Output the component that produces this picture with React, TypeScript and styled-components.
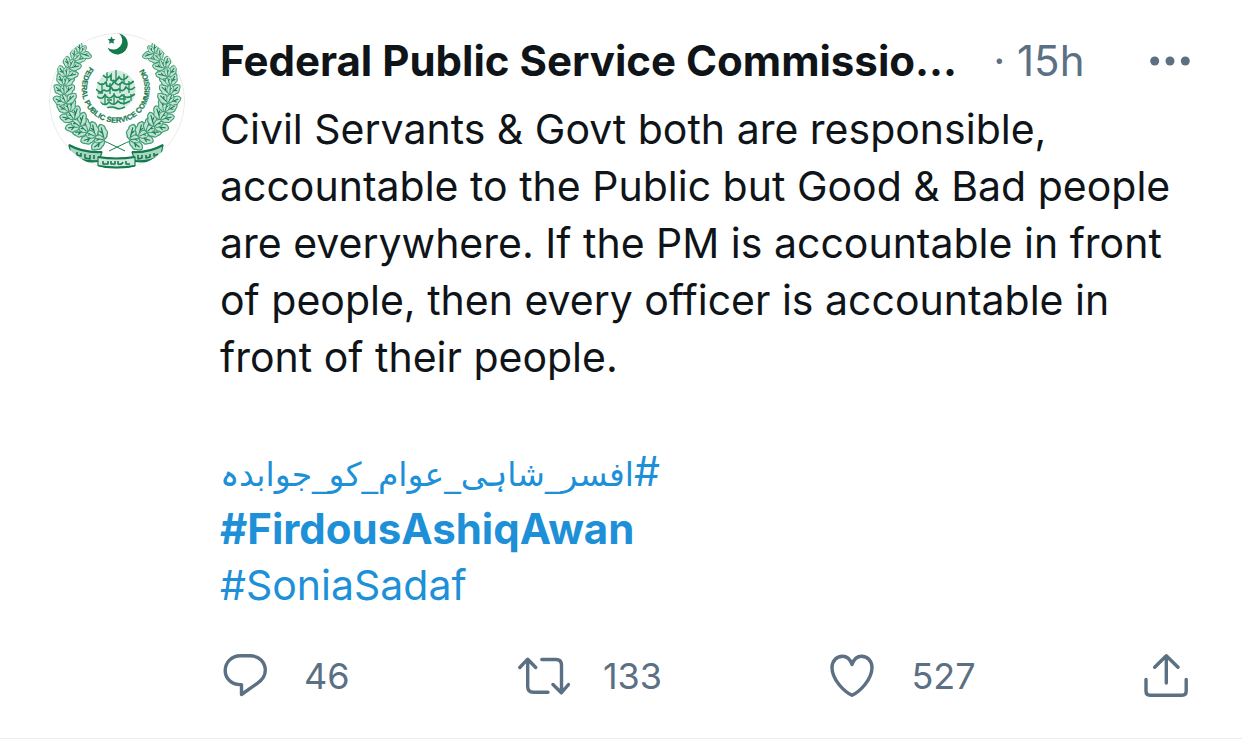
import React from 'react';
import styled, { createGlobalStyle } from 'styled-components';

const GlobalStyle = createGlobalStyle`
  * { box-sizing: border-box; }
  body {
    margin: 0;
    background: #fff;
    color: #0f1419;
    font-family: Inter, 'Liberation Sans', sans-serif;
  }
`;

const Tweet = styled.article`
  display: grid;
  grid-template-columns: 136px minmax(0, 1fr);
  column-gap: 35px;
  padding: 32px 52px 40px 49px;
  border-bottom: 1px solid #ebeef0;
`;

const Avatar = styled.a`
  display: block;
  height: 136px;
  margin-top: 1px;
  border-radius: 50%;
  overflow: hidden;
`;

const Content = styled.div`
  min-width: 0;
`;

const Header = styled.header`
  display: flex;
  align-items: center;
  height: 57px;
  font-size: 42px;
  line-height: 57px;
`;

const Name = styled.a`
  color: #0f1419;
  font-weight: 700;
  text-decoration: none;
  white-space: nowrap;
`;

const Time = styled.span`
  margin-left: 36px;
  color: #5b7083;
  white-space: nowrap;
`;

const IconButton = styled.button`
  display: flex;
  align-items: center;
  padding: 0;
  border: 0;
  background: none;
  color: #5b7083;
  font: inherit;
  cursor: pointer;
`;

const MoreButton = styled(IconButton)`
  margin-left: auto;
`;

const Body = styled.div`
  margin-top: 12px;
  font-size: 41px;
  line-height: 57px;
`;

const Paragraph = styled.p`
  margin: 0 0 57px;
`;

const Tags = styled.div`
  display: flex;
  flex-direction: column;
  align-items: flex-start;
`;

const Tag = styled.a<{ $bold?: boolean }>`
  color: #1d90d8;
  font-size: ${(p) => (p.$bold ? 42 : 41)}px;
  font-weight: ${(p) => (p.$bold ? 700 : 400)};
  text-decoration: none;
`;

const UrduTag = styled(Tag)`
  height: 57px;
  white-space: nowrap;
`;

const UrduWords = styled.span`
  font-family: 'DejaVu Sans', sans-serif;
  font-size: 33px;
  line-height: 1;
`;

const Actions = styled.div`
  display: flex;
  justify-content: space-between;
  align-items: center;
  margin-top: 40px;
  padding: 0 2px 0 3px;
  font-size: 36px;
  line-height: 44px;
`;

const Count = styled.span<{ $gap: number }>`
  margin-left: ${(p) => p.$gap}px;
`;

const strokeProps = {
  fill: 'none',
  stroke: 'currentColor',
  strokeWidth: 3.4,
  strokeLinecap: 'round' as const,
  strokeLinejoin: 'round' as const,
};

const ReplyIcon = () => (
  <svg width="44" height="44" viewBox="0 0 44 44" {...strokeProps} aria-hidden="true">
    <path d="M17.500 1.800H27C36 1.800 42.300 8 42.300 16.300c0 5.500-3 9.700-8 13L18.500 40.500V30.600H17C8.500 30.600 2.200 24.500 2.200 16.500S8.500 1.800 17.500 1.800Z" />
  </svg>
);

const RetweetIcon = () => (
  <svg width="52" height="40" viewBox="0 0 52 40" {...strokeProps} aria-hidden="true">
    <path d="M1.800 11.500 9.700 3.200l8 8.300M9.700 4v26.500q0 5.700 5.700 5.700H30M23.800 3.500h14q5.700 0 5.700 5.700V36M35 28.500l8.300 8.300 7.200-8.300" />
  </svg>
);

const LikeIcon = () => (
  <svg width="44" height="44" viewBox="0 0 44 44" {...strokeProps} aria-hidden="true">
    <path d="M22 10.500C20 5 16.500 2.300 12.500 2.300 6.500 2.300 2 7 2 13.500 2 25.500 14 37.500 22 41.300 30 37.500 42 25.500 42 13.500 42 7 37.500 2.300 31.500 2.300 27.500 2.300 24 5 22 10.500Z" />
  </svg>
);

const ShareIcon = () => (
  <svg width="44" height="44" viewBox="0 0 44 44" {...strokeProps} aria-hidden="true">
    <path d="M10.700 13.300 22.300 1.800l11.700 11.500M22.300 2.500V29M2 25.500v11.700q0 4 4 4h32.200q4 0 4-4V25.500" />
  </svg>
);

const MoreIcon = () => (
  <svg width="40" height="10" viewBox="0 0 40 10" fill="currentColor" aria-hidden="true">
    <circle cx="4.700" cy="5" r="4.500" />
    <circle cx="20" cy="5" r="4.500" />
    <circle cx="35.300" cy="5" r="4.500" />
  </svg>
);

type Leaf = { x: number; y: number; angle: number; size: number };

/* Leaves fan out on both sides of the stem of the left-hand branch. */
const leaves: Leaf[] = [];
for (let i = 0; i < 13; i += 1) {
  const t = i / 12;
  const a = ((104 + t * 122) * Math.PI) / 180;
  const x = 68 + Math.cos(a) * 53;
  const y = 57 + Math.sin(a) * 51;
  const heading = (a * 180) / Math.PI + 90;
  const size = 1.25 - t * 0.3;
  const sway = (i % 3) * 9;
  leaves.push({ x, y, angle: heading - 52 + sway, size });
  leaves.push({ x, y, angle: heading + 62 - sway, size });
  leaves.push({ x, y, angle: heading - 8 + sway, size: size * 0.8 });
}

const Branch = () => (
  <g fill="#c3e2d4" stroke="#3f9e75" strokeWidth="1">
    <path d="M76 118Q58 108 42 104" fill="none" stroke="#16804f" />
    {leaves.map((l, i) => (
      <g key={i} transform={`translate(${l.x} ${l.y}) rotate(${l.angle}) scale(${l.size})`}>
        <path d="M0 0Q2-4 5-3.500 7-5 9-3 12-2 12.500 0 11 3.500 8 3 5 5 3 3 1 3 0 0Z" />
        <path d="M1 0H10M5 0l2.500-2" stroke="#16804f" strokeWidth="1" />
      </g>
    ))}
  </g>
);

const Emblem = () => (
  <svg width="136" height="136" viewBox="0 0 136 136" role="img" aria-label="Federal Public Service Commission emblem">
    <defs>
      <path id="motto" d="M41 33.500A34 34 0 1 0 92.500 33.500" />
      <clipPath id="seal"><circle cx="67" cy="57" r="20" /></clipPath>
    </defs>
    <circle cx="68" cy="68" r="67.500" fill="#fefefe" stroke="#e6e9e8" />
    <path d="M70 .5A10.500 10.500 0 1 1 58.500 14.500 9 9 0 1 0 70 .5Z" fill="#147a4d" />
    <path d="m62.500 3.500 1.200 2.500 2.700.2-2 1.900.6 2.700-2.500-1.400-2.500 1.400.6-2.700-2-1.900 2.700-.2Z" fill="#147a4d" />
    <Branch />
    <g transform="translate(136 0) scale(-1 1)"><Branch /></g>
    <circle cx="67" cy="57" r="19.500" fill="#d3eadf" />
    <g clipPath="url(#seal)" fill="none" stroke="#218a5b" strokeWidth="1.700">
      <path d="M54 42q4 5 8 0v5q5 3 8-3 4 6 9-1M48 49q5 5 9 0l1 4q5 1 7-5 4 7 8 1 5 5 12-1M47 56q4 5 8 1 5 3 7-3 3 6 8 2 4 4 7-2 4 5 9 0M47 63q6 5 9-1 4 6 9 0 4 5 8 0 5 5 13-1M51 69q5 5 9 0 5 5 9-1 4 5 12 0M58 75q5-2 9 0t9-1" />
      <path d="M58 39v9M67 37v12M75 41v9M53 50v10M61 50v11M71 50v10M80 48v12M56 61v10M65 60v12M75 61v11M82 61v7M49 60h5M63 57h6M70 66h7M58 67h5" strokeWidth="1.300" />
    </g>
    <text fill="#167b4e" stroke="#167b4e" strokeWidth="0.200" fontFamily="Liberation Sans, sans-serif" fontSize="7.500" fontWeight="700">
      <textPath href="#motto">FEDERAL PUBLIC SERVICE COMMISSION</textPath>
    </text>
    <g stroke="#147a4d" strokeWidth="1.200" strokeLinejoin="round">
      <path d="M20 112q14 8 33 7l-3 9q-16 2-28-6ZM114 112q-14 8-31 7l3 9q14 2 26-6Z" fill="#a9d6c1" />
      <path d="M20 112q14 8 33 7M114 112q-14 8-31 7M22 122q12 8 28 6M112 122q-12 8-26 6" fill="none" strokeWidth="2.200" />
      <path d="M49 124q18 3 37 0v9q-18 3-37 0Z" fill="#cfe9dd" />
      <path d="M49 124q18 3 37 0M49 133q18 3 37 0" fill="none" strokeWidth="2.200" />
      <path d="M28 119v3l4 1v-3m4 1v4l5 1v-4m4 0v4M54 128v3h5v-3m3 0v3h4v-3m3 0v3q4 1 5-2m3-1v3h4M89 122v4l4-1v-3m4 0v3l4-1v-3m4-1v3l4-2" fill="none" strokeWidth="1.600" />
    </g>
  </svg>
);

export default function App() {
  return (
    <>
      <GlobalStyle />
      <Tweet>
        <Avatar href="#profile"><Emblem /></Avatar>
        <Content>
          <Header>
            <Name href="#profile">Federal Public Service Commissio...</Name>
            <Time>· 15h</Time>
            <MoreButton type="button" aria-label="More"><MoreIcon /></MoreButton>
          </Header>
          <Body>
            <Paragraph>
              Civil Servants &amp; Govt both are responsible, accountable to the Public but Good &amp; Bad people
              are everywhere. If the PM is accountable in front of people, then every officer is accountable in
              front of their people.
            </Paragraph>
            <Tags>
              <UrduTag href="#urdu" dir="rtl" lang="ur">#<UrduWords>افسر_شاہی_عوام_کو_جوابدہ</UrduWords></UrduTag>
              <Tag href="#FirdousAshiqAwan" $bold>#FirdousAshiqAwan</Tag>
              <Tag href="#SoniaSadaf">#SoniaSadaf</Tag>
            </Tags>
          </Body>
          <Actions>
            <IconButton type="button" aria-label="Reply, 46"><ReplyIcon /><Count $gap={37}>46</Count></IconButton>
            <IconButton type="button" aria-label="Retweet, 133"><RetweetIcon /><Count $gap={33}>133</Count></IconButton>
            <IconButton type="button" aria-label="Like, 527"><LikeIcon /><Count $gap={37}>527</Count></IconButton>
            <IconButton type="button" aria-label="Share"><ShareIcon /></IconButton>
          </Actions>
        </Content>
      </Tweet>
    </>
  );
}
